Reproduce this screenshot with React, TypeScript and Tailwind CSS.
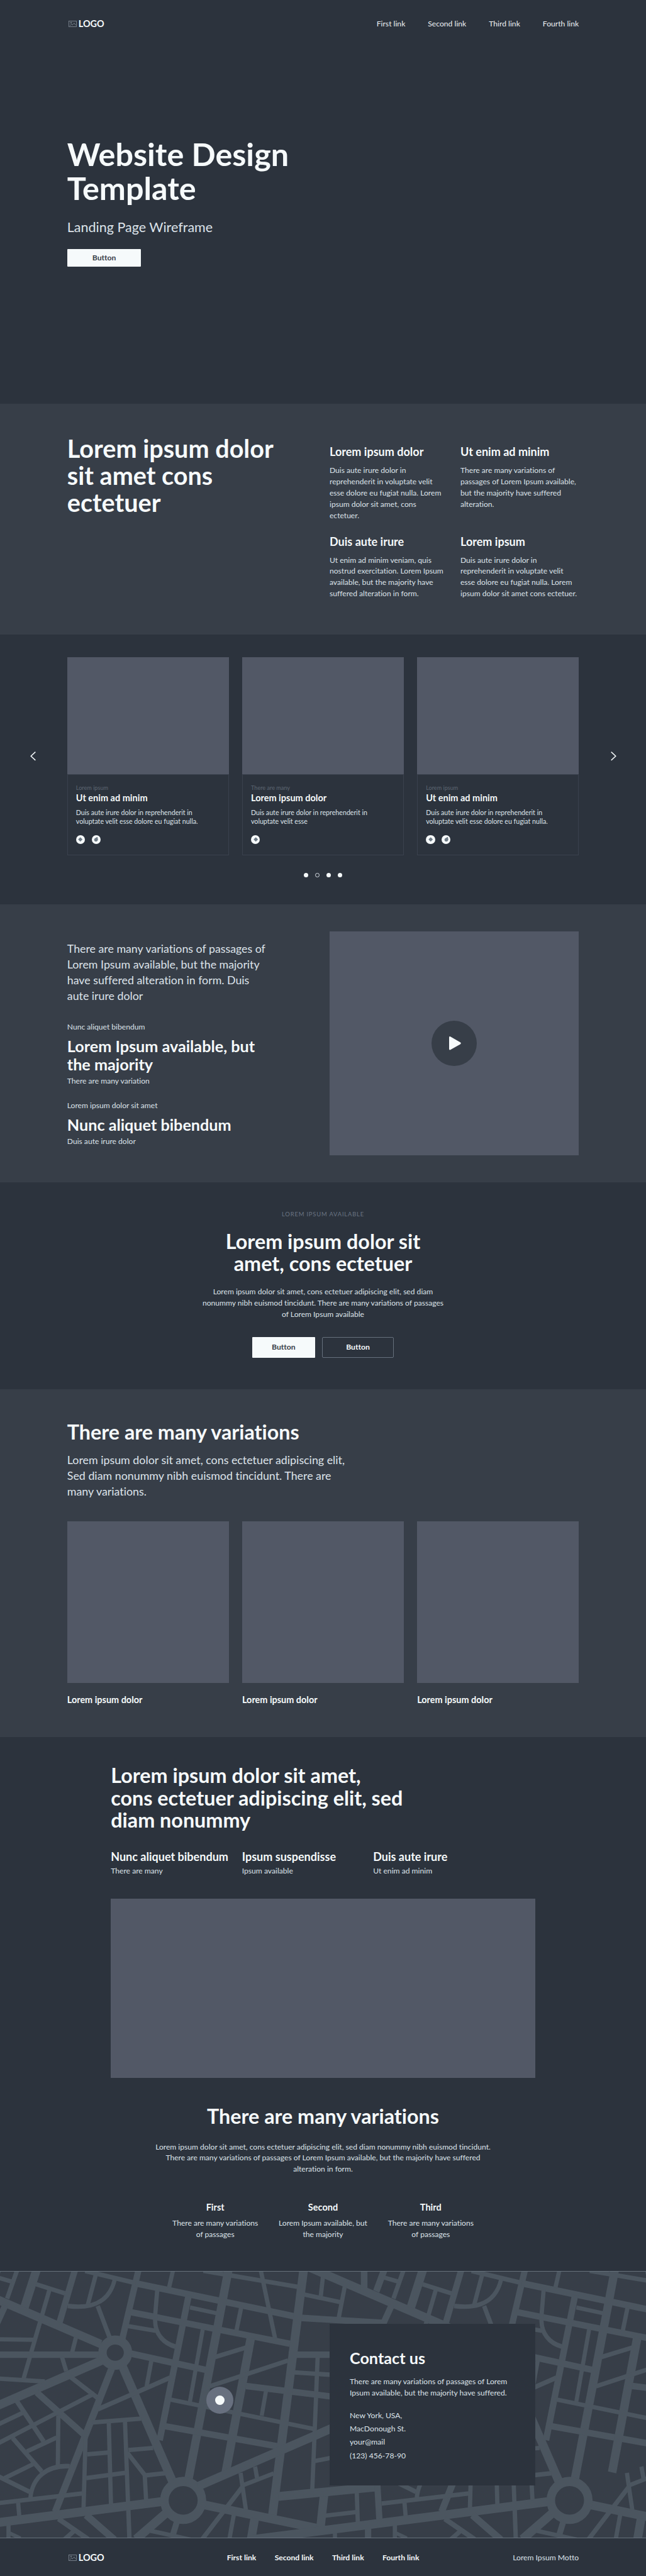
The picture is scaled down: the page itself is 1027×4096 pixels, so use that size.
import type { ReactNode } from 'react';

type Road = [width: number, path: string];

const ROADS: Road[] = [
  [50, 'M-500 -26 L640 425'],
  [38, 'M-620 487 H650'],
  [51, 'M690 503 L-1195 1253'],
  [40, 'M772 410 L880 -12'],
  [27, 'M540 -1 L868 71'],
  [38, 'M860 71 L1920 273 L2445 302'],
  [40, 'M33 200 L-17 300 L-100 475'],
  [28, 'M109 -6 L45 160'],
  [25, 'M-20 36 L75 61'],
  [42, 'M-14 -6 L-64 118'],
  [42, 'M-141 -6 V110'],
  [27, 'M2049 30 L2035 145'],
  [25, 'M1925 135 L2160 181'],
  [27, 'M2187 90 L2147 280'],
  [54, 'M231 -6 L155 212'],
  [40, 'M475 -6 L378 298'],
  [26, 'M230 77 L412 130'],
  [27, 'M314 108 L150 625'],
  [27, 'M608 20 L556 200'],
  [26, 'M728 48 C700 160 610 225 430 203'],
  [28, 'M620 203 L697 390'],
  [25, 'M-10 397 L212 400'],
  [27, 'M482 386 L457 475'],
  [27, 'M393 500 L420 582'],
  [26, 'M-585 590 L-360 603 L-10 626 L285 643'],
  [27, 'M2015 500 L1995 960 L1981 1272'],
  [28, 'M448 617 L617 737'],
  [43, 'M715 552 L350 1402'],
  [54, 'M775 550 L1100 1237'],
  [41, 'M1013 985 L1197 140'],
  [38, 'M818 478 L1310 576'],
  [37, 'M825 238 L1840 423'],
  [27, 'M998 105 L985 250 L984 290 C985 360 1030 420 1114 440'],
  [25, 'M812 320 L988 348'],
  [27, 'M1098 -6 L1072 98'],
  [26, 'M1290 -2 L1890 92'],
  [53, 'M1449 -6 L1195 1215'],
  [24, 'M1205 212 L1378 246'],
  [26, 'M1286 340 L1204 765'],
  [27, 'M960 522 L930 672'],
  [27, 'M1078 621 L622 804'],
  [25, 'M1080 748 L1990 919'],
  [38, 'M1040 902 L1780 1023'],
  [54, 'M1591 390 L1432 1172'],
  [27, 'M1530 212 L1500 346'],
  [26, 'M1362 501 L1562 445'],
  [26, 'M1330 671 L1828 521'],
  [37, 'M1560 669 L2100 730 L2300 750'],
  [26, 'M1687 700 L1660 842'],
  [27, 'M1654 -6 L1745 392'],
  [55, 'M1926 -6 L1727 1430'],
  [39, 'M232 706 L530 950'],
  [26, 'M600 712 L345 833 L-10 1002'],
  [29, 'M105 755 L277 992'],
  [26, 'M-20 897 L144 825'],
  [28, 'M80 972 L265 1167'],
  [26, 'M170 1050 L358 970'],
  [27, 'M370 840 L367 1132'],
  [26, 'M210 1124 L28 1206'],
  [27, 'M-150 1132 L187 1285'],
  [27, 'M442 1136 C300 1130 205 1200 193 1320'],
  [26, 'M-30 1353 L522 1295'],
  [27, 'M115 1348 L122 1424'],
  [52, 'M-850 1563 L1022 1343'],
  [51, 'M1290 1360 L2060 1507'],
  [54, 'M2056 1302 L2032 1500'],
  [51, 'M1765 1312 L2413 1255'],
  [40, 'M2394 1248 L2407 1450'],
  [27, 'M2263 1285 L2270 1470'],
  [25, 'M2060 1424 L2260 1403'],
  [40, 'M2335 1495 V1560'],
  [26, 'M2125 1515 V1560'],
  [27, 'M54 1475 V1560'],
  [22, 'M60 1525 L130 1556'],
  [25, 'M590 881 L895 859'],
  [27, 'M690 880 L704 1358'],
  [27, 'M793 875 L812 1345'],
  [25, 'M815 1042 L972 1030'],
  [26, 'M553 1067 L684 1057'],
  [26, 'M547 1205 L794 1175'],
  [26, 'M918 1190 L1047 1177'],
  [27, 'M543 965 L530 1378'],
  [27, 'M808 1058 L918 1187 L927 1335'],
  [28, 'M814 1385 L821 1560'],
  [53, 'M1055 1408 L862 1562'],
  [43, 'M545 1420 L727 1565'],
  [30, 'M370 1442 L560 1562'],
  [28, 'M470 1513 L410 1562'],
  [38, 'M1122 1460 L1097 1535'],
  [25, 'M950 1511 L1220 1566'],
  [28, 'M1535 1260 L1282 1562'],
  [27, 'M1484 1415 L1455 1562'],
  [55, 'M1616 1440 L1593 1562'],
  [27, 'M1526 1175 L1536 1240 L1560 1390'],
  [25, 'M1538 1248 L1736 1178'],
  [27, 'M1618 1138 L1631 1206'],
  [25, 'M1998 1106 L2150 1078'],
];

function StreetTile({ shift }: { shift: number }) {
  return (
    <g transform={`translate(${shift} 0)`}>
      {ROADS.map(([w, d]) => (
        <path key={d} d={d} strokeWidth={w} fill="none" />
      ))}
      <ellipse cx="731" cy="475" rx="81" ry="73.5" strokeWidth="53" fill="#373e48" />
      <ellipse cx="1162" cy="1335" rx="119" ry="110" strokeWidth="54" fill="#373e48" />
    </g>
  );
}

function StreetMap() {
  return (
    <svg className="absolute inset-0 size-full" viewBox="0 3 4098 1549" preserveAspectRatio="none" stroke="#4b555f">
      <StreetTile shift={0} />
      <StreetTile shift={2451} />
    </svg>
  );
}

function Logo() {
  return (
    <div className="flex items-center gap-[3px] pl-[2px] text-[14.45px] leading-[18px] font-bold text-[#f6fafb]">
      <svg className="h-[10px] w-[13px]" viewBox="0 0 13 10" fill="none" stroke="#87909b" strokeWidth="0.8">
        <rect x="0.5" y="0.5" width="12" height="9" />
        <circle cx="4" cy="3.2" r="1" />
        <path d="M2 8 L4.6 5.6 L6 7 L8.8 3.6 L11.4 7.2" />
      </svg>
      <span>LOGO</span>
    </div>
  );
}

function Diamond() {
  return (
    <span className="flex size-[14.4px] items-center justify-center rounded-full bg-[#f6fafb]">
      <svg className="size-[7.4px]" viewBox="0 0 10 10" fill="#6f7b86">
        <rect x="1.6" y="1.6" width="6.8" height="6.8" rx="1" transform="rotate(45 5 5)" />
      </svg>
    </span>
  );
}

function Flame() {
  return (
    <span className="flex size-[14.4px] items-center justify-center rounded-full bg-[#f6fafb]">
      <svg className="size-[7.4px]" viewBox="0 0 10 10" fill="#6f7b86">
        <path d="M5.2 1.3 C6.2 0 7.6 -0.3 8.6 0 C8.2 1 8.2 1.8 8.6 2.6 C9.4 4 9.2 6.2 8.4 7.6 C7.4 9.6 5.6 10 4.4 9.8 C2 9.5 0.8 7.6 0.9 5.6 C1 3.6 2.4 2.2 5.2 1.3 Z" />
      </svg>
    </span>
  );
}

function Chevron({ flip }: { flip?: boolean }) {
  return (
    <svg
      className={flip ? 'h-[14.5px] w-[9px] -scale-x-100' : 'h-[14.5px] w-[9px]'}
      viewBox="0 0 9 14.5"
      fill="none"
      stroke="#f6fafb"
      strokeWidth="1.5"
    >
      <path d="M8.3 0.6 L1.2 7.25 L8.3 13.9" />
    </svg>
  );
}

function Feature({ title, children }: { title: string; children: ReactNode }) {
  return (
    <div>
      <h3 className="text-[18.05px] leading-[24px] font-bold text-[#f6fafb]">{title}</h3>
      <p className="mt-[9px] text-[12.1px] leading-[17.9px]">{children}</p>
    </div>
  );
}

function SlideCard({ label, title, flame, children }: { label: string; title: string; flame?: boolean; children: ReactNode }) {
  return (
    <article className="flex h-[314.5px] w-[257px] flex-col">
      <div className="h-[185.5px] shrink-0 bg-[#525866]" />
      <div className="flex-1 border border-[#3a414d] px-[13px] pt-[15px]">
        <p className="text-[9.15px] leading-[12px] text-[#5d6672]">{label}</p>
        <h3 className="mt-px text-[14.5px] leading-[18px] font-bold text-[#f6fafb]">{title}</h3>
        <p className="mt-[7px] text-[10.67px] leading-[14.5px]">{children}</p>
        <div className="mt-[14px] flex gap-[10.5px]">
          <Diamond />
          {flame && <Flame />}
        </div>
      </div>
    </article>
  );
}

function ArticleColumn({ title, text }: { title: string; text: string }) {
  return (
    <div className="w-[208.5px]">
      <h3 className="text-[18.05px] leading-[24px] font-bold text-[#f6fafb]">{title}</h3>
      <p className="mt-[2px] text-[12.15px] leading-[18px]">{text}</p>
    </div>
  );
}

function CenterColumn({ title, children }: { title: string; children: ReactNode }) {
  return (
    <div className="w-[171.3px]">
      <h3 className="text-[14.5px] leading-[18px] font-bold text-[#f6fafb]">{title}</h3>
      <p className="mt-[7.4px] text-[12.1px] leading-[17.85px]">{children}</p>
    </div>
  );
}

export default function App() {
  return (
    <div className="w-[1027px] bg-[#2c333d] font-['Lato',sans-serif] whitespace-nowrap text-[#dde3ea] [font-variant-ligatures:none]">
      <section className="h-[642px] px-[106.8px]">
        <header className="flex h-[76px] items-center justify-between">
          <Logo />
          <nav className="flex gap-9 text-[12.15px] leading-[18px] text-[#eef2f5]">
            <a>First link</a>
            <a>Second link</a>
            <a>Third link</a>
            <a>Fourth link</a>
          </nav>
        </header>
        <h1 className="mt-[142.2px] text-[50.3px] leading-[53.6px] font-bold text-[#f6fafb]">
          Website Design
          <br />
          Template
        </h1>
        <p className="mt-[21.6px] text-[21.5px] leading-[28px]">Landing Page Wireframe</p>
        <button className="mt-[21px] block h-[28.5px] w-[117.6px] rounded-[1px] bg-[#f6fafb] text-[12.2px] font-bold text-[#373e48]">
          Button
        </button>
      </section>

      <section className="flex h-[367px] bg-[#373e48] pl-[106.8px]">
        <h2 className="w-[417.2px] pt-[50.4px] text-[39.6px] leading-[42.9px] font-bold text-[#f6fafb]">
          Lorem ipsum dolor
          <br />
          sit amet cons
          <br />
          ectetuer
        </h2>
        <div className="grid grid-cols-[188px_188px] content-start gap-x-5 gap-y-5 pt-[64px]">
          <Feature title="Lorem ipsum dolor">
            Duis aute irure dolor in
            <br />
            reprehenderit in voluptate velit
            <br />
            esse dolore eu fugiat nulla. Lorem
            <br />
            ipsum dolor sit amet, cons
            <br />
            ectetuer.
          </Feature>
          <Feature title="Ut enim ad minim">
            There are many variations of
            <br />
            passages of Lorem Ipsum available,
            <br />
            but the majority have suffered
            <br />
            alteration.
          </Feature>
          <Feature title="Duis aute irure">
            Ut enim ad minim veniam, quis
            <br />
            nostrud exercitation. Lorem Ipsum
            <br />
            available, but the majority have
            <br />
            suffered alteration in form.
          </Feature>
          <Feature title="Lorem ipsum">
            Duis aute irure dolor in
            <br />
            reprehenderit in voluptate velit
            <br />
            esse dolore eu fugiat nulla. Lorem
            <br />
            ipsum dolor sit amet cons ectetuer.
          </Feature>
        </div>
      </section>

      <section className="h-[429px] pt-[36px]">
        <div className="flex items-center justify-between px-[47.5px]">
          <Chevron />
          <div className="flex gap-[21.2px]">
            <SlideCard label="Lorem ipsum" title="Ut enim ad minim" flame>
              Duis aute irure dolor in reprehenderit in
              <br />
              voluptate velit esse dolore eu fugiat nulla.
            </SlideCard>
            <SlideCard label="There are many" title="Lorem ipsum dolor">
              Duis aute irure dolor in reprehenderit in
              <br />
              voluptate velit esse
            </SlideCard>
            <SlideCard label="Lorem ipsum" title="Ut enim ad minim" flame>
              Duis aute irure dolor in reprehenderit in
              <br />
              voluptate velit esse dolore eu fugiat nulla.
            </SlideCard>
          </div>
          <Chevron flip />
        </div>
        <div className="mt-[28.5px] flex justify-center gap-[10.8px]">
          <span className="size-[7.2px] rounded-full bg-[#f6fafb]" />
          <span className="size-[7.2px] rounded-full border border-[#dde3ea]" />
          <span className="size-[7.2px] rounded-full bg-[#f6fafb]" />
          <span className="size-[7.2px] rounded-full bg-[#f6fafb]" />
        </div>
      </section>

      <section className="flex h-[442px] bg-[#373e48] pl-[106.8px]">
        <div className="w-[417.2px] pt-[58px] text-[12.1px] leading-[18px]">
          <p className="text-[17.8px] leading-[24.87px]">
            There are many variations of passages of
            <br />
            Lorem Ipsum available, but the majority
            <br />
            have suffered alteration in form. Duis
            <br />
            aute irure dolor
          </p>
          <p className="mt-[28.5px]">Nunc aliquet bibendum</p>
          <h3 className="mt-[7.4px] text-[25.2px] leading-[28.5px] font-bold text-[#f6fafb]">
            Lorem Ipsum available, but
            <br />
            the majority
          </h3>
          <p className="mt-[3.4px]">There are many variation</p>
          <p className="mt-[21.2px]">Lorem ipsum dolor sit amet</p>
          <h3 className="mt-[7.4px] text-[25.2px] leading-[28.5px] font-bold text-[#f6fafb]">Nunc aliquet bibendum</h3>
          <p className="mt-[3px]">Duis aute irure dolor</p>
        </div>
        <div className="mt-[42.7px] flex h-[356.8px] w-[396.2px] items-center justify-center bg-[#525866]">
          <div className="flex size-[71.4px] items-center justify-center rounded-full bg-[#373e48]">
            <svg className="ml-[3px] h-[21.6px] w-[19px]" viewBox="0 0 19 21.6" fill="#f6fafb">
              <path d="M0 1.6 Q0 -0.4 2 0.3 L17.6 9.2 Q20 10.8 17.6 12.4 L2 21.3 Q0 22 0 20 Z" />
            </svg>
          </div>
        </div>
      </section>

      <section className="flex h-[329px] flex-col items-center pt-[44.8px] text-center">
        <p className="text-[9.4px] leading-[12px] tracking-[0.83px] text-[#6b7584]">LOREM IPSUM AVAILABLE</p>
        <h2 className="mt-[19.1px] text-[32.35px] leading-[35.6px] font-bold text-[#f6fafb]">
          Lorem ipsum dolor sit
          <br />
          amet, cons ectetuer
        </h2>
        <p className="mt-[18.3px] text-[12.1px] leading-[17.85px]">
          Lorem ipsum dolor sit amet, cons ectetuer adipiscing elit, sed diam
          <br />
          nonummy nibh euismod tincidunt. There are many variations of passages
          <br />
          of Lorem Ipsum available
        </p>
        <div className="mt-[27.5px] flex gap-[11.3px] text-[12.2px] font-bold">
          <button className="h-[32.2px] w-[99.7px] rounded-[1px] bg-[#f6fafb] text-[#373e48]">Button</button>
          <button className="h-[32.2px] w-[114px] rounded-[2px] border border-[#66707d] text-[#f6fafb]">Button</button>
        </div>
      </section>

      <section className="h-[553px] bg-[#373e48] px-[106.8px] pt-[50px]">
        <h2 className="text-[32.25px] leading-[36px] font-bold text-[#f6fafb]">There are many variations</h2>
        <p className="mt-[14px] text-[17.83px] leading-[25px]">
          Lorem ipsum dolor sit amet, cons ectetuer adipiscing elit,
          <br />
          Sed diam nonummy nibh euismod tincidunt. There are
          <br />
          many variations.
        </p>
        <div className="mt-[35.4px] flex justify-between text-[14.45px] leading-[18px] font-bold text-[#f6fafb]">
          <figure className="w-[257px]">
            <div className="h-[257px] bg-[#525866]" />
            <figcaption className="mt-[18px]">Lorem ipsum dolor</figcaption>
          </figure>
          <figure className="w-[257px]">
            <div className="h-[257px] bg-[#525866]" />
            <figcaption className="mt-[18px]">Lorem ipsum dolor</figcaption>
          </figure>
          <figure className="w-[257px]">
            <div className="h-[257px] bg-[#525866]" />
            <figcaption className="mt-[18px]">Lorem ipsum dolor</figcaption>
          </figure>
        </div>
      </section>

      <section className="h-[849px] px-[176.2px] pt-[42.9px]">
        <h2 className="text-[32.35px] leading-[35.7px] font-bold text-[#f6fafb]">
          Lorem ipsum dolor sit amet,
          <br />
          cons ectetuer adipiscing elit, sed
          <br />
          diam nonummy
        </h2>
        <div className="mt-[27.6px] flex">
          <ArticleColumn title="Nunc aliquet bibendum" text="There are many" />
          <ArticleColumn title="Ipsum suspendisse" text="Ipsum available" />
          <ArticleColumn title="Duis aute irure" text="Ut enim ad minim" />
        </div>
        <div className="mt-[35px] h-[285.5px] bg-[#525866]" />
        <div className="text-center">
          <h2 className="mt-[43.2px] text-[32.25px] leading-[36px] font-bold text-[#f6fafb]">There are many variations</h2>
          <p className="mt-[21.3px] text-[12.1px] leading-[17.85px]">
            Lorem ipsum dolor sit amet, cons ectetuer adipiscing elit, sed diam nonummy nibh euismod tincidunt.
            <br />
            There are many variations of passages of Lorem Ipsum available, but the majority have suffered
            <br />
            alteration in form.
          </p>
          <div className="mt-[42.7px] flex justify-center">
            <CenterColumn title="First">
              There are many variations
              <br />
              of passages
            </CenterColumn>
            <CenterColumn title="Second">
              Lorem Ipsum available, but
              <br />
              the majority
            </CenterColumn>
            <CenterColumn title="Third">
              There are many variations
              <br />
              of passages
            </CenterColumn>
          </div>
        </div>
      </section>

      <section className="relative h-[425px] overflow-hidden border-y border-[#66717c] bg-[#373e48] pt-[83px] pl-[524px]">
        <StreetMap />
        <div className="absolute top-[183px] left-[328px] flex size-[43px] items-center justify-center rounded-full bg-[#68707f]">
          <span className="size-[14.4px] rounded-full bg-[#f6fafb]" />
        </div>
        <div className="relative h-[256.8px] w-[326.8px] bg-[#2c333d] pt-[39px] pl-[32px]">
          <h2 className="text-[25.2px] leading-[30px] font-bold text-[#f6fafb]">Contact us</h2>
          <p className="mt-[14px] text-[12.1px] leading-[17.85px]">
            There are many variations of passages of Lorem
            <br />
            Ipsum available, but the majority have suffered.
          </p>
          <address className="mt-[16px] text-[12.15px] leading-[21.35px] not-italic">
            New York, USA,
            <br />
            MacDonough St.
            <br />
            your@mail
            <br />
            (123) 456-78-90
          </address>
        </div>
      </section>

      <footer className="grid h-[60px] grid-cols-[1fr_auto_1fr] items-center px-[106.8px] pt-px text-[12.15px] leading-[18px]">
        <Logo />
        <nav className="flex gap-[29.3px] font-bold text-[#f6fafb]">
          <a>First link</a>
          <a>Second link</a>
          <a>Third link</a>
          <a>Fourth link</a>
        </nav>
        <p className="text-right">Lorem Ipsum Motto</p>
      </footer>
    </div>
  );
}
